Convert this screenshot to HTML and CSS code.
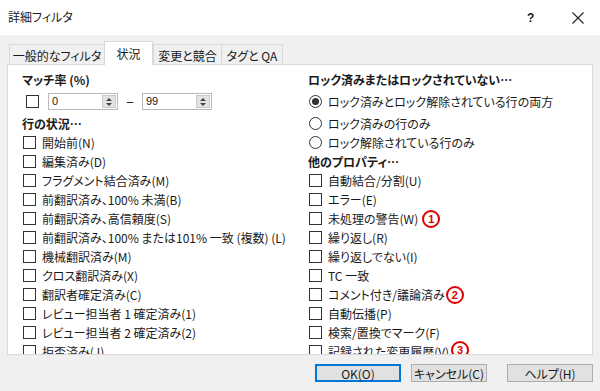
FILE: index.html
```html
<!DOCTYPE html>
<html lang="ja">
<head>
<meta charset="utf-8">
<link rel="stylesheet" href="styles.css">
</head>
<body>
<div class="dialog">
  <div class="titlebar">
    <span class="title">詳細フィルタ</span>
    <span class="help">?</span>
    <svg class="close" width="12" height="12" viewBox="0 0 12 12"><path d="M0.5 0.5L11.5 11.5M11.5 0.5L0.5 11.5" stroke="#222" stroke-width="1.1" fill="none"/></svg>
  </div>
  <div class="tabs">
    <div class="tab t1">一般的なフィルタ</div>
    <div class="tab active">状況</div>
    <div class="tab t3">変更と競合</div>
    <div class="tab t4">タグと QA</div>
  </div>
  <div class="panel">
    <div class="col left">
      <div class="row head">マッチ率 (%)</div>
      <div class="row spinrow">
        <span class="cb"></span>
        <div class="spin"><span class="val">0</span><span class="arrows"><i class="up"></i><i class="down"></i></span></div>
        <span class="dash">–</span>
        <div class="spin"><span class="val">99</span><span class="arrows"><i class="up"></i><i class="down"></i></span></div>
      </div>
      <div class="row head">行の状況…</div>
      <div class="row item"><span class="cb"></span>開始前(N)</div>
      <div class="row item"><span class="cb"></span>編集済み(D)</div>
      <div class="row item"><span class="cb"></span>フラグメント結合済み(M)</div>
      <div class="row item"><span class="cb"></span>前翻訳済み、100% 未満(B)</div>
      <div class="row item"><span class="cb"></span>前翻訳済み、高信頼度(S)</div>
      <div class="row item"><span class="cb"></span>前翻訳済み、100% または101% 一致 (複数) (L)</div>
      <div class="row item"><span class="cb"></span>機械翻訳済み(M)</div>
      <div class="row item"><span class="cb"></span>クロス翻訳済み(X)</div>
      <div class="row item"><span class="cb"></span>翻訳者確定済み(C)</div>
      <div class="row item"><span class="cb"></span>レビュー担当者 1 確定済み(1)</div>
      <div class="row item"><span class="cb"></span>レビュー担当者 2 確定済み(2)</div>
      <div class="row item"><span class="cb"></span>拒否済み(J)</div>
    </div>
    <div class="col right">
      <div class="row head">ロック済みまたはロックされていない…</div>
      <div class="row item first"><span class="rb on"></span>ロック済みとロック解除されている行の両方</div>
      <div class="row item"><span class="rb"></span>ロック済みの行のみ</div>
      <div class="row item"><span class="rb"></span>ロック解除されている行のみ</div>
      <div class="row head">他のプロパティ…</div>
      <div class="row item"><span class="cb"></span>自動結合/分割(U)</div>
      <div class="row item"><span class="cb"></span>エラー(E)</div>
      <div class="row item"><span class="cb"></span>未処理の警告(W)<span class="mark m1">1</span></div>
      <div class="row item"><span class="cb"></span>繰り返し(R)</div>
      <div class="row item"><span class="cb"></span>繰り返しでない(I)</div>
      <div class="row item"><span class="cb"></span>TC 一致</div>
      <div class="row item"><span class="cb"></span>コメント付き/議論済み<span class="mark m2">2</span></div>
      <div class="row item"><span class="cb"></span>自動伝播(P)</div>
      <div class="row item"><span class="cb"></span>検索/置換でマーク(F)</div>
      <div class="row item"><span class="cb"></span>記録された変更履歴(V)<span class="mark m3">3</span></div>
    </div>
  </div>
  <div class="buttons">
    <div class="btn default">OK(O)</div>
    <div class="btn cancel">キャンセル(C)</div>
    <div class="btn">ヘルプ(H)</div>
  </div>
</div>
</body>
</html>
```

FILE: styles.css
```css
html, body {
  margin: 0;
  padding: 0;
}
body {
  width: 600px;
  height: 391px;
  overflow: hidden;
  background: #f0f0f0;
  font-family: "Noto Sans CJK JP", "Noto Sans", sans-serif;
  font-size: 12px;
  font-feature-settings: "palt";
  color: #1a1a1a;
}
.dialog {
  width: 600px;
  height: 391px;
  display: flex;
  flex-direction: column;
}
.titlebar {
  height: 35px;
  background: #fff;
  display: flex;
  align-items: center;
  padding-left: 8px;
  box-sizing: border-box;
}
.title {
  font-size: 12px;
  flex: 1;
  margin-top: -2px;
}
.help {
  font-weight: bold;
  font-size: 12px;
  width: 12px;
  margin-right: 33px;
  font-family: "Liberation Sans", sans-serif;
}
.close {
  margin-right: 16px;
}
.tabs {
  height: 29px;
  display: flex;
  align-items: flex-end;
  padding-left: 9px;
  box-sizing: border-box;
}
.tab {
  height: 20px;
  box-sizing: border-box;
  border: 1px solid #d9d9d9;
  border-bottom: none;
  background: #f0f0f0;
  display: flex;
  align-items: center;
  justify-content: center;
  margin-right: -1px;
  padding-top: 1px;
}
.t1 { width: 96px; }
.t3 { width: 69px; margin-left: 1px; }
.t4 { width: 62px; }
.tab.active {
  width: 49px;
  background: #fff;
  position: relative;
  z-index: 1;
  margin-bottom: -1px;
  height: 24px;
  padding-bottom: 1px;
}
.panel {
  margin-left: 7px;
  width: 586px;
  height: 291px;
  box-sizing: border-box;
  border: 1px solid #d9d9d9;
  background: #fff;
  display: flex;
  overflow: hidden;
  padding-top: 5px;
}
.col {
  display: flex;
  flex-direction: column;
}
.left {
  width: 300px;
  padding-left: 14px;
  box-sizing: border-box;
}
.right {
  flex: 1;
}
.row {
  height: 19px;
  flex: none;
  display: flex;
  align-items: center;
  white-space: nowrap;
}
.head {
  font-weight: bold;
}
.spinrow {
  height: 25px;
  padding-left: 4px;
}
.right .first {
  height: 25px;
}
.cb {
  width: 13px;
  height: 13px;
  box-sizing: border-box;
  border: 1px solid #333;
  background: #fff;
  flex: none;
}
.item .cb {
  margin-left: 1px;
  margin-right: 6px;
}
.spinrow .cb {
  margin-right: 9px;
}
.rb {
  width: 13px;
  height: 13px;
  box-sizing: border-box;
  border: 1px solid #333;
  border-radius: 50%;
  background: #fff;
  margin-left: 1px;
  margin-right: 6px;
  flex: none;
  display: flex;
  align-items: center;
  justify-content: center;
}
.rb.on::after {
  content: "";
  width: 7px;
  height: 7px;
  border-radius: 50%;
  background: #333;
}
.spin {
  width: 70px;
  height: 17px;
  box-sizing: border-box;
  border: 1px solid #b9b9b9;
  display: flex;
  background: #fff;
}
.val {
  flex: 1;
  padding-left: 3px;
  font-size: 11px;
  line-height: 15px;
  font-family: "Liberation Sans", sans-serif;
}
.arrows {
  width: 14px;
  margin: 1px;
  background: #e3e3e3;
  border: 1px solid #c8c8c8;
  box-sizing: border-box;
  display: flex;
  flex-direction: column;
  align-items: center;
  justify-content: center;
  gap: 2px;
}
.up, .down {
  width: 0;
  height: 0;
  border-left: 3px solid transparent;
  border-right: 3px solid transparent;
}
.up { border-bottom: 3px solid #444; }
.down { border-top: 3px solid #444; }
.dash {
  width: 24px;
  text-align: center;
  font-family: "Liberation Sans", sans-serif;
}
.mark {
  width: 18px;
  height: 18px;
  box-sizing: border-box;
  border: 2px solid #e00000;
  border-radius: 50%;
  color: #e00000;
  font-weight: bold;
  font-size: 11px;
  font-family: "Liberation Sans", sans-serif;
  display: inline-flex;
  align-items: center;
  justify-content: center;
  margin-left: 4px;
  flex: none;
}
.m2 { margin-left: 1px; }
.m3 { margin-left: 2px; position: relative; top: -2px; }
.buttons {
  flex: 1;
  display: flex;
  justify-content: flex-end;
  align-items: flex-start;
  padding-top: 9px;
  padding-right: 7px;
}
.btn {
  width: 86px;
  height: 18px;
  box-sizing: border-box;
  border: 1px solid #adadad;
  background: #e1e1e1;
  display: flex;
  align-items: center;
  justify-content: center;
  margin-left: 10px;
}
.btn.default {
  border: 2px solid #0078d7;
}
.btn.cancel {
  width: 76px;
  margin-right: 10px;
}
```
